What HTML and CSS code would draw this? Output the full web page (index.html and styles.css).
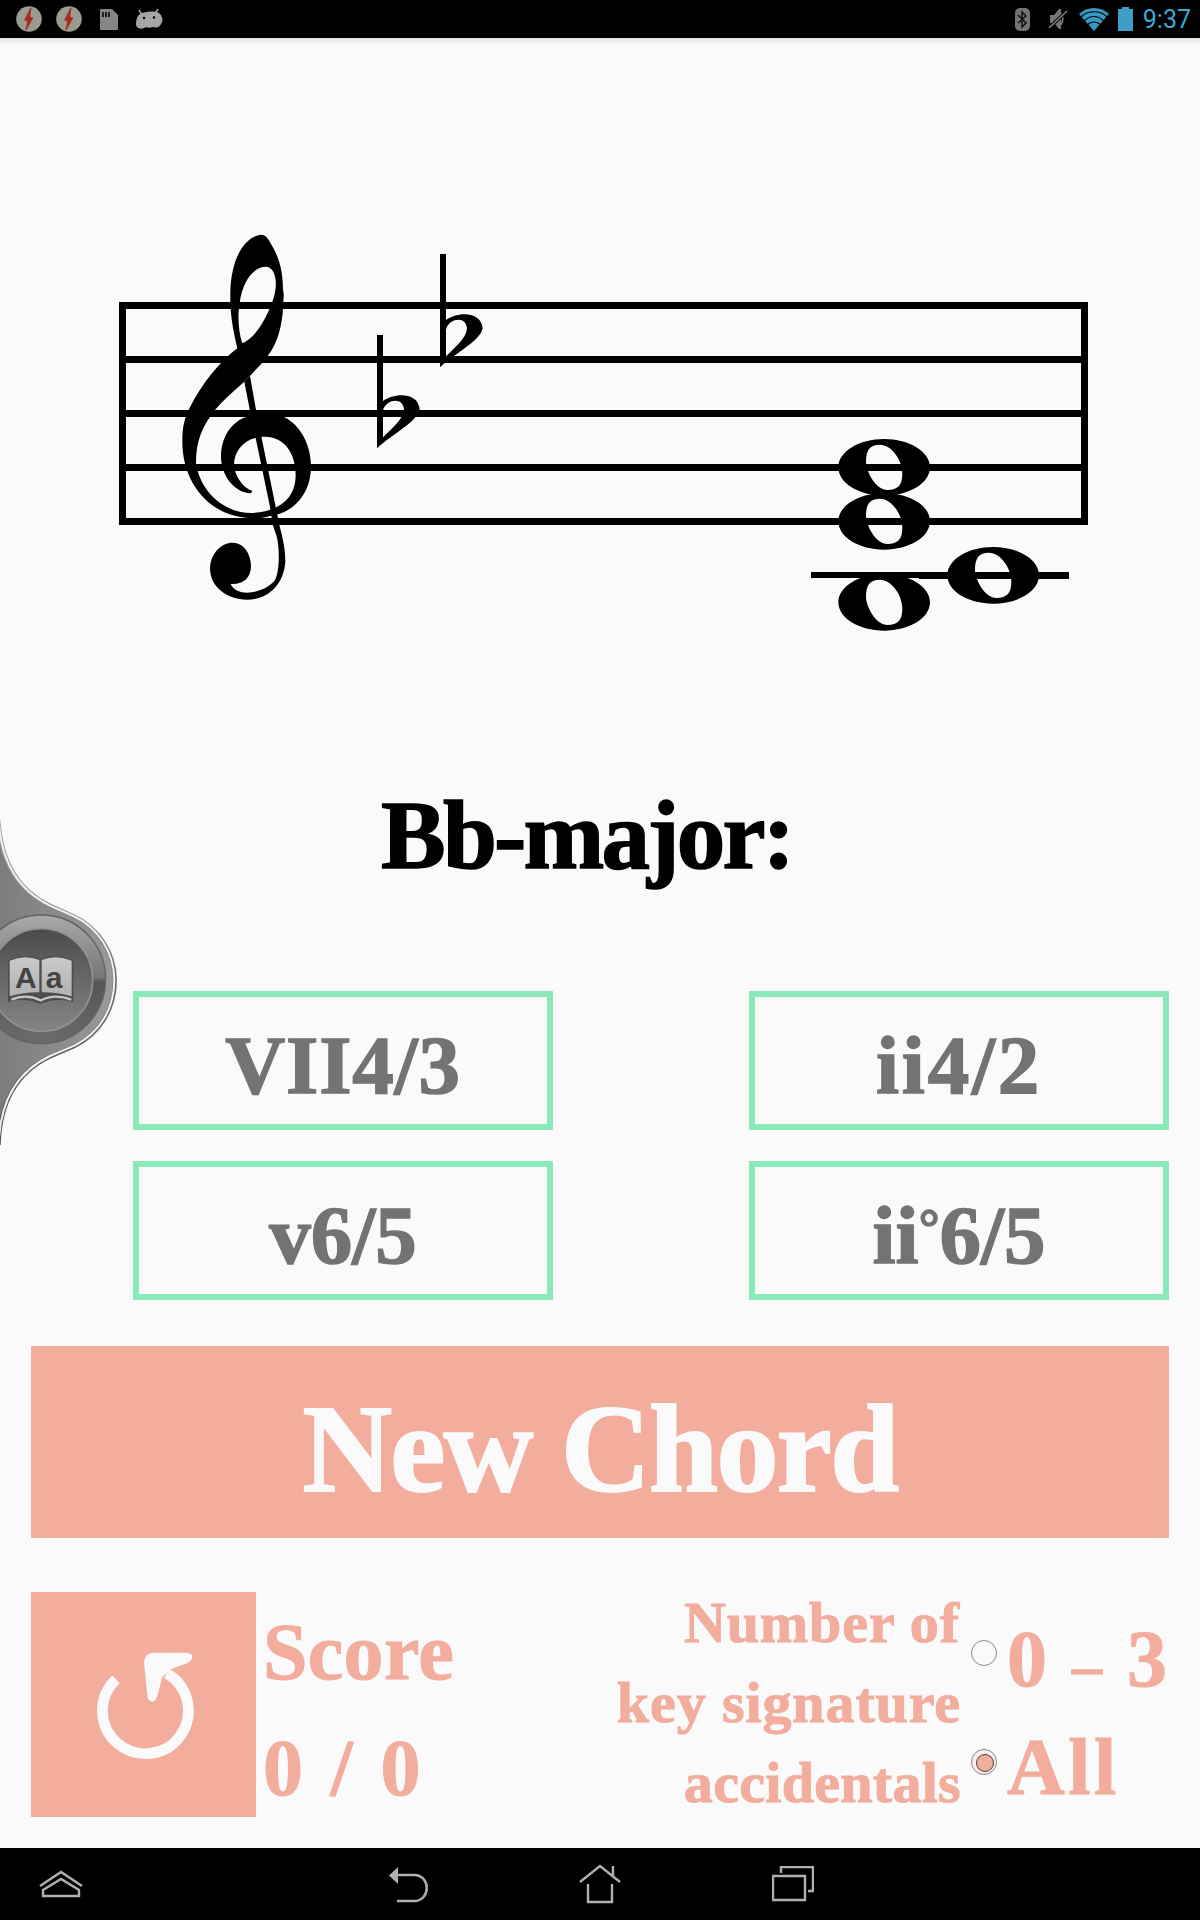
FILE: index.html
```html
<!DOCTYPE html>
<html lang="en">
<head>
<meta charset="utf-8">
<title>Chord Trainer</title>
<link rel="stylesheet" href="styles.css">
</head>
<body>
<div class="screen">
  <header class="status">
    <div class="status-left">
      <svg width="26" height="26" viewBox="0 0 26 26"><circle cx="13" cy="13" r="12.8" fill="#9b9b90"/><path d="M15 2 9 14l3 1-2 9 6.500-12-3-1z" fill="#a92c20" stroke="#a92c20" stroke-width="1.200"/></svg>
      <svg width="26" height="26" viewBox="0 0 26 26"><circle cx="13" cy="13" r="12.800" fill="#9b9b90"/><path d="M15 2 9 14l3 1-2 9 6.500-12-3-1z" fill="#a92c20" stroke="#a92c20" stroke-width="1.200"/></svg>
      <svg class="sd" width="18" height="21" viewBox="0 0 18 21"><path d="M1 0h11l6 6v14q0 1-1 1H1q-1 0-1-1V1q0-1 1-1z" fill="#858585"/><path d="M3 3v5M6 3v5M9 3v5" stroke="#181818" stroke-width="1.800"/></svg>
      <svg class="droid" width="27" height="21" viewBox="0 0 27 21"><path d="M6 6 3 1M19 5l3-5" stroke="#a6a6a6" stroke-width="1.500"/><path d="M6 4C9 3 17 2 21 3c5 2 7 8 4 12-2 4-5 4-8 3-3 1-5 1-7 0-4 3-10 2-10-3C0 10 2 5 6 4z" fill="#a6a6a6"/><circle cx="8" cy="9" r="1.200"/><circle cx="18" cy="8.500" r="1.200"/></svg>
    </div>
    <div class="status-right">
      <svg width="15" height="23" viewBox="0 0 15 23"><rect width="15" height="23" rx="5" fill="#737373"/><path d="m3 7 8 8-4 4V4l4 4-8 7" fill="none" stroke="#111" stroke-width="1.500"/></svg>
      <svg class="mute" width="20" height="22" viewBox="0 0 20 22"><path d="M2 7h4l5-6h2v20h-2l-5-6H2z" fill="#757575"/><path d="M11 4c5 3 5 11 0 14" fill="none" stroke="#757575" stroke-width="1.800"/><path d="M1 20 19 3" stroke="#000" stroke-width="3.500"/><path d="M1 20 19 3" stroke="#808080" stroke-width="1.600"/></svg>
      <svg class="wifi" width="30" height="23" viewBox="0 0 30 23"><path d="M15 23 0 6C8-2 22-2 30 6z" fill="#3799c0"/><path d="M2 9C9 2 21 2 28 9M5 13c6-6 14-6 20 0M8 17c4-4 10-4 14 0" fill="none" stroke="#000" stroke-width="1.200"/></svg>
      <svg class="battery" width="15" height="24" viewBox="0 0 15 24"><path d="M4 0h7v2h4v22H0V2h4z" fill="#3d9fc8"/></svg>
      <span class="clock">9:37</span>
    </div>
  </header>

  <main class="app">
    <svg class="staff" width="1200" height="712" viewBox="0 38 1200 712">
      <g stroke="#000" stroke-width="7" fill="none">
        <path d="M122.500 305.500H1084.500V521.500H122.500z"/>
        <path d="M122 359.500H1085M122 413.500H1085M122 467.500H1085"/>
      </g>
      <g transform="translate(110 220) scale(.33333)">
        <path fill-rule="evenodd" d="M453 44C470 44 478 63 490 84C511 122 519 164 519 210C524 228 519 235 519 266C516 315 504 367 475 405C460 428 438 447 420 468L403 485C370 514 342 538 315 570C276 620 258 662 258 730C270 812 338 879 425 879C508 875 557 835 557 765C557 700 523 650 465 650C409 650 372 688 372 735C376 774 404 807 427 812L423 820C370 818 333 762 333 710C333 645 372 597 420 588C455 580 490 580 522 591C570 614 603 673 603 740C603 820 550 880 480 888C454 897 415 897 380 889C282 866 217 775 217 665C217 620 223 595 240 562C275 492 327 427 382 385C367 322 360 280 361 220C362 118 402 50 453 44ZM397 370C384 332 383 283 389 248C397 186 430 140 467 140C496 140 508 190 487 245C463 309 431 356 397 370Z"/>
        <path d="M403 485 420 468 439 575 497 860 508 915C522 968 526 995 526 1025C521 1097 471 1139 411 1139C350 1139 300 1100 300 1045C302 998 335 968 368 968C402 968 423 1003 423 1037C423 1073 401 1094 362 1092C371 1111 390 1118 411 1118C451 1118 485 1095 495 1080C509 1055 510 983 499 946L488 914 480 860 421 578Z"/>
        <g id="flat"><path fill-rule="evenodd" d="M801 345H819V543C851 518 924 515 929 567C924 604 848 641 801 685ZM819 572C826 543 860 535 874 549C898 577 862 611 819 652Z"/></g>
        <use href="#flat" x="189" y="-243"/>
      </g>
      <path d="M811 575H921" stroke="#000" stroke-width="6"/>
      <path d="M919 575.500H1069" stroke="#000" stroke-width="7"/>
      <g transform="translate(780 400) scale(.33333)">
        <path id="note" fill-rule="evenodd" d="M175 202C175 154 238 117 312 117C387 117 450 154 450 202C450 250 387 287 312 287C238 287 175 250 175 202ZM300 134C333 134 367 178 367 222C367 255 353 270 323 270C287 270 258 214 258 185C258 150 270 134 300 134Z"/>
        <use href="#note" y="162"/><use href="#note" y="405"/><use href="#note" x="327" y="324"/>
      </g>
    </svg>

    <h1 class="key">Bb-major:</h1>

    <div class="answers">
      <button class="answer roman">VII4/3</button>
      <button class="answer wide">ii4/2</button>
      <button class="answer">v6/5</button>
      <button class="answer">ii<span class="degree">°</span>6/5</button>
    </div>

    <button class="new-chord">New Chord</button>

    <div class="footer">
      <button class="reset" aria-label="Reset score">
        <svg width="225" height="225" viewBox="33 36 675 675"><path d="M288 298A129 129 0 1 0 440 280" fill="none" stroke="#fafafa" stroke-width="32"/><path d="M372 248Q372 218 404 218H500Q517 219 517 232Q515 243 502 249L452 268 427 291 412 348Q407 365 396 365 383 362 382 345Z" fill="#fafafa"/></svg>
      </button>
      <div class="score"><div>Score</div><div class="points">0 / 0</div></div>
      <div class="legend"><div class="number">Number of</div><div class="signature">key signature</div><div class="accidentals">accidentals</div></div>
      <div class="options">
        <label class="option"><span class="radio"></span><span class="range">0 <span class="dash">–</span> 3</span></label>
        <label class="option all"><span class="radio checked"></span><span>All</span></label>
      </div>
    </div>
  </main>

  <nav class="nav">
    <svg class="expand" width="44" height="30" viewBox="0 0 44 30"><path d="M1 17 22 3 43 17M4 21 22 10 40 21V27H4z"/></svg>
    <svg class="back" width="40" height="38" viewBox="0 0 40 38"><path d="M8 10H25C42 10 42 36 25 36H8"/><path class="solid" d="M0 10.500 9 2V19z"/></svg>
    <svg class="home" width="42" height="40" viewBox="0 0 42 40"><path d="M1 18 21 2 41 18M34 12V2M9 20V38H33V20"/></svg>
    <svg class="recent" width="42" height="36" viewBox="0 0 42 36"><path d="M1 10H33V34H1zM9 7V1H41V25H36"/></svg>
  </nav>

  <svg class="dictionary" width="130" height="360" viewBox="0 0 390 1080">
    <defs>
      <linearGradient id="body" x2="1"><stop stop-color="#7c7c7c"/><stop offset="1" stop-color="#999"/></linearGradient>
      <linearGradient id="edge" x2="0" y2="1"><stop stop-color="#aaa"/><stop offset=".5" stop-color="#707070"/><stop offset="1" stop-color="#4c4c4c"/></linearGradient>
      <linearGradient id="ring" x2="0" y2="1"><stop stop-color="#aaa"/><stop offset=".48" stop-color="#777"/><stop offset=".52" stop-color="#555"/><stop offset="1" stop-color="#6b6b6b"/></linearGradient>
      <linearGradient id="disc" x2="0" y2="1"><stop stop-color="#4b4b4b"/><stop offset="1" stop-color="#858585"/></linearGradient>
      <linearGradient id="page" x2="0" y2="1"><stop stop-color="#c9c9c9"/><stop offset="1" stop-color="#b2b2b2"/></linearGradient>
    </defs>
    <path d="M-5 60C5 190 55 270 150 317L220 348C295 382 345 460 345 541C345 625 300 700 225 738L150 770C55 815 0 900-4 1035" fill="url(#body)" stroke="url(#edge)" stroke-width="12"/>
    <path d="M-5 60C5 190 55 270 150 317L220 348C295 382 343 460 343 541C343 625 300 698 225 736L150 768C55 813 0 898-4 1033" fill="none" stroke="#f0f0f0" stroke-width="6"/>
    <circle cx="124" cy="538" r="193" fill="url(#ring)" stroke="#626262" stroke-width="4"/>
    <circle cx="124" cy="540" r="154" fill="url(#disc)" stroke="#929292" stroke-width="5"/>
    <path d="M24 482Q75 458 122 478Q170 458 220 482V606Q165 592 122 612Q75 592 24 606Z" fill="#4d4d4d"/>
    <path d="M29 482Q75 462 118 480V577Q75 576 29 589ZM125 480Q170 462 215 482V589Q170 576 125 577Z" fill="url(#page)"/>
    <path d="M34 599Q80 580 122 601Q165 580 214 599" fill="none" stroke="#c6c6c6" stroke-width="7"/>
    <text class="letters" x="45" y="563">A</text><text class="letters" x="137" y="563">a</text>
  </svg>
</div>
</body>
</html>
```
FILE: styles.css
```css
* { box-sizing: border-box; }

body {
  margin: 0;
  background: #fafafa;
}

button {
  margin: 0;
  padding: 0;
  border: 0;
  font: inherit;
}

svg { display: block; flex: none; }

.screen {
  position: relative;
  display: flex;
  flex-direction: column;
  width: 1200px;
  height: 1920px;
  overflow: hidden;
  font-family: "Liberation Serif", serif;
  font-weight: bold;
}

/* Status bar */
.status {
  display: flex;
  justify-content: space-between;
  height: 38px;
  padding: 0 9px 0 16px;
  background: #000;
}

.status-left, .status-right { display: flex; align-items: center; }
.status-left { gap: 14px; }
.sd { margin-left: 4px; }
.droid { margin-left: 4px; }
.mute { margin-left: 18px; }
.wifi { margin-left: 11px; }
.battery { margin-left: 9px; }

.clock {
  margin-left: 10px;
  font: 25px/39px Roboto, sans-serif;
  color: #3ba9d8;
}

/* Exercise */
.app {
  flex: 1;
  background: linear-gradient(#e3e1e3, #fafafa 6px);
}

.key {
  margin: 36px 0 0 381px;
  font-size: 97px;
  line-height: 100px;
  letter-spacing: -2.800px;
  -webkit-text-stroke: 1.500px;
}

.answers {
  display: grid;
  grid-template-columns: 420px 420px;
  grid-auto-rows: 139px;
  gap: 31px 196px;
  margin: 105px 31px 0 133px;
}

.answer {
  padding-top: 9px;
  border: 6px solid #8ae9b8;
  background: #fafafa;
  color: #737373;
  font-size: 83px;
  line-height: 1;
  -webkit-text-stroke: 1.500px;
}

.roman { letter-spacing: .8px; }
.wide { letter-spacing: 2.800px; }

.degree {
  display: inline-block;
  width: 21px;
  font-size: 52px;
  line-height: 1;
  vertical-align: 18px;
}

.new-chord {
  display: block;
  width: 1138px;
  height: 192px;
  margin: 46px 31px 0;
  padding-top: 16px;
  background: #f2ad9c;
  color: #fafafa;
  font-size: 124px;
  line-height: 1;
  letter-spacing: -1.600px;
  -webkit-text-stroke: 2px;
}

.footer {
  display: flex;
  align-items: flex-start;
  padding: 44px 31px 0;
  color: #f2ad9c;
  white-space: nowrap;
  -webkit-text-stroke: 1px;
}

.reset {
  display: block;
  height: 225px;
  margin-top: 10px;
  background: #f2ad9c;
}

.score {
  margin: 12px 0 0 7px;
  font-size: 80px;
  line-height: 116px;
  letter-spacing: .3px;
}

.points { word-spacing: 7px; }

.legend {
  width: 360px;
  margin: 1px 0 0 auto;
  font-size: 58px;
  line-height: 80px;
  text-align: right;
}

.number { padding-right: 1px; letter-spacing: .9px; }
.signature { letter-spacing: .9px; }
.accidentals { letter-spacing: .3px; }

.options {
  width: 198px;
  margin: 22px 0 0 10px;
  font-size: 80px;
  line-height: 109px;
}

.option { display: flex; align-items: flex-start; gap: 10px; }
.all { letter-spacing: 3.500px; }
.range { padding-top: 1px; margin-bottom: -1px; word-spacing: 5px; }
.dash { font-size: 60px; line-height: 1; }

.radio {
  flex: none;
  width: 26px;
  height: 26px;
  margin-top: 36px;
  border: 1px solid #888;
  border-radius: 50%;
}

.checked {
  padding: 4px;
  background: #faece8;
}

.checked::before {
  content: "";
  display: block;
  width: 16px;
  height: 16px;
  border: 1px solid #444;
  border-radius: 50%;
  background: #f2ad9c;
}

/* System navigation */
.nav {
  display: flex;
  align-items: center;
  height: 72px;
  padding-left: 39px;
  background: #000;
}

.nav path {
  fill: none;
  stroke: #b0b0b0;
  stroke-width: 2.400;
}

.nav .solid { fill: #b0b0b0; stroke: none; }
.back { margin-left: 306px; }
.home { margin-left: 150px; }
.recent { margin-left: 151px; }

/* Floating dictionary handle over the page edge */
.dictionary {
  position: absolute;
  left: 0;
  top: 800px;
}

.letters {
  font: bold 90px "Liberation Sans", sans-serif;
  fill: #444;
}
```
